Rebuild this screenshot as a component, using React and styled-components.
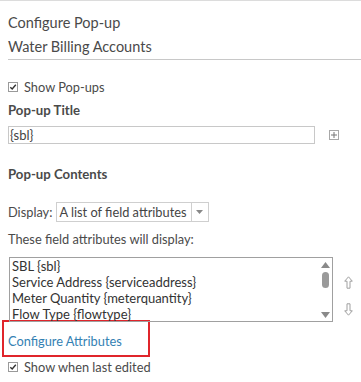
import React from "react";
import styled, { createGlobalStyle } from "styled-components";

const GlobalStyle = createGlobalStyle`
  body {
    margin: 0;
    background: #fff;
    font-family: "Lato", "Noto Sans", sans-serif;
    color: #4a4a4a;
  }
`;

const Panel = styled.div`
  width: 361px;
  height: 382px;
  border-top: 1px solid #dcdcdc;
  box-sizing: border-box;
  overflow: hidden;
`;

const Header = styled.div`
  margin-left: 8px;
  padding-top: 10px;
  border-bottom: 1px solid #c8c8c8;
`;

const HeaderLine = styled.div`
  font-size: 14.5px;
  line-height: 24px;
  height: 24px;
`;

const Body = styled.div`
  padding: 0 0 0 8px;
  font-size: 12.8px;
`;

const CheckRow = styled.label`
  display: flex;
  align-items: center;
  gap: 6px;
  height: 20px;
  margin-top: ${(p) => p.$top || 0}px;
`;

const Box = styled.span`
  width: 10px;
  height: 10px;
  border: 1px solid #9a9a9a;
  box-sizing: border-box;
  display: flex;
  align-items: center;
  justify-content: center;
  background: #fff;
`;

const Label = styled.div`
  font-size: 13.2px;
  font-weight: 700;
  height: 20px;
  line-height: 20px;
  margin-top: ${(p) => p.$top || 0}px;
`;

const TitleRow = styled.div`
  display: flex;
  align-items: center;
  gap: 14px;
  margin-top: 6px;
`;

const TextInput = styled.div`
  width: 307px;
  height: 18px;
  border: 1px solid #c8c8c8;
  box-sizing: border-box;
  font-size: 13px;
  line-height: 16px;
  padding-left: 1px;
  color: #444;
`;

const PlusBox = styled.span`
  width: 10px;
  height: 10px;
  border: 1px solid #a8a8a8;
  box-sizing: border-box;
  display: flex;
  align-items: center;
  justify-content: center;
`;

const DisplayRow = styled.div`
  display: flex;
  align-items: center;
  gap: 4px;
  margin-top: 18px;
`;

const Select = styled.div`
  display: flex;
  align-items: stretch;
  height: 20px;
  border: 1px solid #cfcfcf;
  box-sizing: border-box;
  background: #fff;
`;

const SelectText = styled.span`
  padding: 0 4px 0 2px;
  line-height: 18px;
  color: #444;
`;

const SelectArrow = styled.span`
  width: 16px;
  border-left: 1px solid #cfcfcf;
  display: flex;
  align-items: center;
  justify-content: center;
`;

const Note = styled.div`
  height: 20px;
  line-height: 20px;
  margin-top: 7px;
`;

const ListRow = styled.div`
  display: flex;
  align-items: flex-start;
  margin-top: 8px;
`;

const ListBox = styled.div`
  width: 324px;
  height: 65px;
  border: 1px solid #a0a0a0;
  box-sizing: border-box;
  display: flex;
  margin-left: 1px;
`;

const Items = styled.div`
  flex: 1;
  padding: 0 0 0 2px;
`;

const Item = styled.div`
  font-size: 13px;
  line-height: 16px;
  height: 16px;
  color: #333;
  white-space: nowrap;
`;

const Scroll = styled.div`
  width: 14px;
  display: flex;
  flex-direction: column;
  align-items: center;
  padding: 4px 0 3px;
  box-sizing: border-box;
`;

const Thumb = styled.div`
  width: 7px;
  height: 16px;
  border-radius: 4px;
  background: #9a9a9a;
  margin-top: 4px;
`;

const Spacer = styled.div`
  flex: 1;
`;

const MoveCol = styled.div`
  display: flex;
  flex-direction: column;
  align-items: center;
  gap: 14px;
  margin: 19px 0 0 11px;
`;

const Highlight = styled.div`
  margin: -2px 0 0 -6px;
  width: 148px;
  height: 37px;
  border: 2px solid #e0252b;
  box-sizing: border-box;
  display: flex;
  align-items: center;
  padding-left: 4px;
  padding-top: 5px;
`;

const Link = styled.a`
  color: #3481b3;
  text-decoration: none;
`;

const Check = () => (
  <Box>
    <svg width="8" height="8" viewBox="0 0 8 8">
      <path d="M1.3 4.2 L3.2 6 L6.8 1.8" fill="none" stroke="#333" strokeWidth="1.4" />
    </svg>
  </Box>
);

const Tri = ({ down }) => (
  <svg width="9" height="6" viewBox="0 0 9 6">
    <path d={down ? "M0 0 H9 L4.5 6 Z" : "M0 6 H9 L4.5 0 Z"} fill="#8a8a8a" />
  </svg>
);

const MoveArrow = ({ down }) => (
  <svg width="9" height="13" viewBox="0 0 9 13" style={down ? { transform: "rotate(180deg)" } : undefined}>
    <path d="M4.5 0.8 L8.3 5.2 H6 V12.2 H3 V5.2 H0.7 Z" fill="none" stroke="#a0a0a0" strokeWidth="1" />
  </svg>
);

export default function App() {
  return (
    <>
      <GlobalStyle />
      <Panel>
        <Header>
          <HeaderLine>Configure Pop-up</HeaderLine>
          <HeaderLine>Water Billing Accounts</HeaderLine>
        </Header>
        <Body>
          <CheckRow $top={17}>
            <Check />
            Show Pop-ups
          </CheckRow>
          <Label $top={3}>Pop-up Title</Label>
          <TitleRow>
            <TextInput>{"{sbl}"}</TextInput>
            <PlusBox>
              <svg width="6" height="6" viewBox="0 0 6 6">
                <path d="M3 0 V6 M0 3 H6" stroke="#777" strokeWidth="1" />
              </svg>
            </PlusBox>
          </TitleRow>
          <Label $top={20}>Pop-up Contents</Label>
          <DisplayRow>
            Display:
            <Select>
              <SelectText>A list of field attributes</SelectText>
              <SelectArrow>
                <svg width="7" height="4" viewBox="0 0 7 4">
                  <path d="M0 0 H7 L3.5 4 Z" fill="#888" />
                </svg>
              </SelectArrow>
            </Select>
          </DisplayRow>
          <Note>These field attributes will display:</Note>
          <ListRow>
            <ListBox>
              <Items>
                <Item>SBL {"{sbl}"}</Item>
                <Item>Service Address {"{serviceaddress}"}</Item>
                <Item>Meter Quantity {"{meterquantity}"}</Item>
                <Item>Flow Type {"{flowtype}"}</Item>
              </Items>
              <Scroll>
                <Tri />
                <Thumb />
                <Spacer />
                <Tri down />
              </Scroll>
            </ListBox>
            <MoveCol>
              <MoveArrow />
              <MoveArrow down />
            </MoveCol>
          </ListRow>
          <Highlight>
            <Link href="#">Configure Attributes</Link>
          </Highlight>
          <CheckRow $top={0}>
            <Check />
            Show when last edited
          </CheckRow>
        </Body>
      </Panel>
    </>
  );
}
